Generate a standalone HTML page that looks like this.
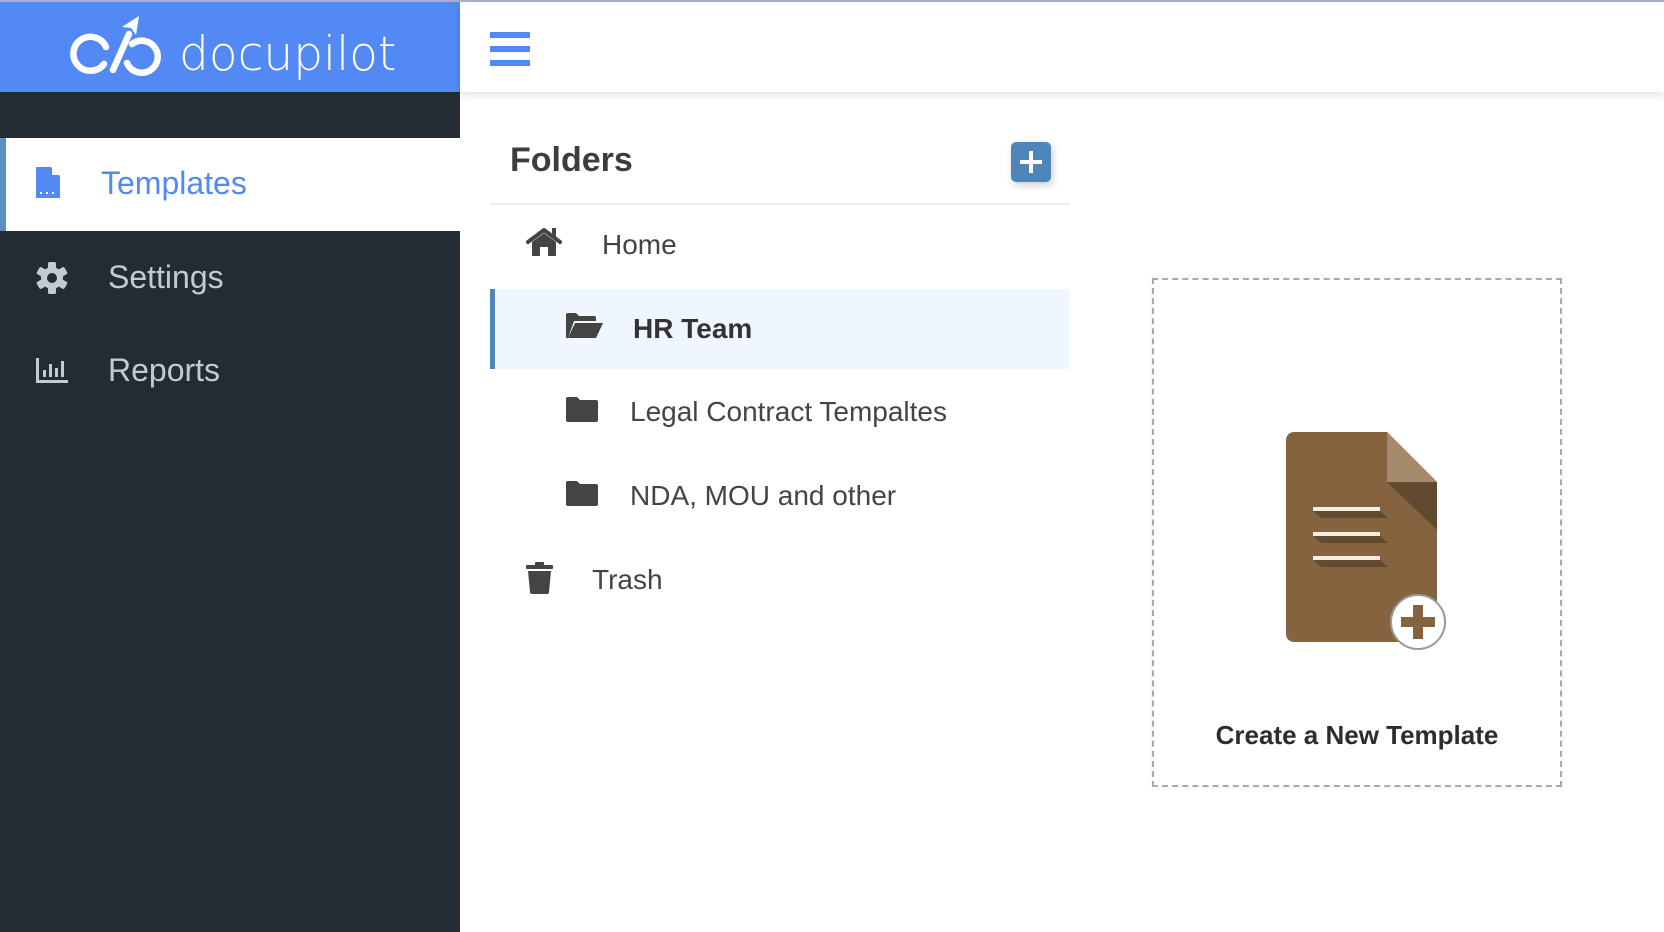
<!DOCTYPE html>
<html><head><meta charset="utf-8"><style>
*{margin:0;padding:0;box-sizing:border-box}
body{width:1664px;height:932px;overflow:hidden;background:#fff;font-family:"Liberation Sans",Arial,sans-serif;position:relative}
.abs{position:absolute}
.topline{left:0;top:0;width:1664px;height:2px;background:#a7b1c4;z-index:5}
.logo{left:0;top:0;width:460px;height:92px;background:#5389f5}
.side{left:0;top:92px;width:460px;height:840px;background:#242b33}
.hdr{left:460px;top:0;width:1204px;height:92px;background:#fff;box-shadow:0 3px 8px rgba(0,0,0,.12)}
.bar{left:490px;width:40px;height:6px;background:#5389f5}
.t{position:absolute;white-space:nowrap}
.dark{color:#444}
</style></head><body>
<div class="abs topline"></div>
<div class="abs logo">
<svg class="abs" style="left:0;top:0" width="460" height="92" viewBox="0 0 460 92">
<g fill="none" stroke="#fff" stroke-width="6.5" stroke-linecap="round">
<path d="M106 47 A17 17 0 1 0 104 64"/>
<path d="M113 70 L129 34"/>
<path d="M132 44 A16 16 0 1 1 127 63"/>
</g>
<path d="M122 27 L139 16 L136 35 L131 28 Z" fill="#fff"/>
<text x="179" y="70" fill="#fff" font-size="47" font-family="DejaVu Sans, Liberation Sans, sans-serif" font-weight="300">docupilot</text>
</svg>
</div>
<div class="abs hdr"></div>
<div class="abs bar" style="top:32px"></div>
<div class="abs bar" style="top:46px"></div>
<div class="abs bar" style="top:60px"></div>
<div class="abs side"></div>
<div class="abs" style="left:0;top:138px;width:460px;height:93px;background:#fff;border-left:6px solid #5a8fc0"></div>
<svg class="abs" style="left:36px;top:167px" width="24" height="31" viewBox="0 0 24 31"><path d="M1 0 H15 L24 9 V30 a1 1 0 0 1 -1 1 H1 a1 1 0 0 1 -1 -1 V1 a1 1 0 0 1 1 -1Z" fill="#5389f5"/><path d="M16 0 L24 8 H16Z" fill="#fff"/><rect x="4" y="25" width="2" height="2" fill="#fff"/><rect x="10" y="25" width="2" height="2" fill="#fff"/><rect x="16" y="25" width="2" height="2" fill="#fff"/></svg>
<div class="t" style="left:101px;top:165px;font-size:32px;color:#5389f5">Templates</div>
<svg class="abs" style="left:36px;top:261px" width="32" height="34" viewBox="-16 -17 32 34"><g fill="#c3cbd1"><circle r="11"/><g id="tt"><rect x="-4" y="-16" width="8" height="8" rx="1.5"/></g><use href="#tt" transform="rotate(60)"/><use href="#tt" transform="rotate(120)"/><use href="#tt" transform="rotate(180)"/><use href="#tt" transform="rotate(240)"/><use href="#tt" transform="rotate(300)"/></g><circle r="5" fill="#242b33"/></svg>
<div class="t" style="left:108px;top:259px;font-size:32px;color:#c3cbd1">Settings</div>
<svg class="abs" style="left:36px;top:358px" width="32" height="25" viewBox="0 0 32 25"><g fill="#c3cbd1"><rect x="0" y="0" width="3" height="25"/><rect x="0" y="22" width="32" height="3"/><rect x="7" y="12" width="3" height="7"/><rect x="13" y="6" width="3" height="13"/><rect x="19" y="10" width="3" height="9"/><rect x="25" y="3" width="3" height="16"/></g></svg>
<div class="t" style="left:108px;top:352px;font-size:32px;color:#c3cbd1">Reports</div>

<div class="t dark" style="left:510px;top:141px;font-size:34px;font-weight:bold;color:#3d3d3d">Folders</div>
<div class="abs" style="left:1011px;top:142px;width:40px;height:40px;border-radius:5px;background:#4f86b8;box-shadow:2px 3px 8px rgba(0,0,0,.2)"></div>
<div class="abs" style="left:1020px;top:160px;width:22px;height:4px;background:#fff"></div>
<div class="abs" style="left:1029px;top:151px;width:4px;height:22px;background:#fff"></div>
<div class="abs" style="left:490px;top:203px;width:580px;height:2px;background:#eee"></div>
<svg class="abs" style="left:526px;top:227px" width="36" height="29" viewBox="0 0 36 29"><path d="M2 15 L18 3 L34 15" fill="none" stroke="#444" stroke-width="4" stroke-linecap="round" stroke-linejoin="round"/><path d="M6 15 L18 6 L30 15 V29 H22 V20 H14 V29 H6Z" fill="#444"/><rect x="26" y="1" width="4" height="10" fill="#444"/></svg>
<div class="t dark" style="left:602px;top:229px;font-size:28px">Home</div>
<div class="abs" style="left:490px;top:289px;width:580px;height:80px;background:#f0f6fe;border-left:5px solid #4f86b8"></div>
<svg class="abs" style="left:566px;top:313px" width="37" height="25" viewBox="0 0 37 25"><path d="M0 2 a2 2 0 0 1 2 -2 H10 L13 3 H28 a2 2 0 0 1 2 2 V8 H8 L2 25 H0Z" fill="#444"/><path d="M9 10 H37 L30 25 H2Z" fill="#444"/></svg>
<div class="t" style="left:633px;top:313px;font-size:28px;font-weight:bold;color:#333">HR Team</div>
<svg class="abs" style="left:566px;top:397px" width="32" height="25" viewBox="0 0 32 25"><path d="M0 2 a2 2 0 0 1 2 -2 H11 L14 3 H30 a2 2 0 0 1 2 2 V23 a2 2 0 0 1 -2 2 H2 a2 2 0 0 1 -2 -2Z" fill="#444"/></svg>
<div class="t dark" style="left:630px;top:396px;font-size:28px">Legal Contract Tempaltes</div>
<svg class="abs" style="left:566px;top:481px" width="32" height="25" viewBox="0 0 32 25"><path d="M0 2 a2 2 0 0 1 2 -2 H11 L14 3 H30 a2 2 0 0 1 2 2 V23 a2 2 0 0 1 -2 2 H2 a2 2 0 0 1 -2 -2Z" fill="#444"/></svg>
<div class="t dark" style="left:630px;top:480px;font-size:28px">NDA, MOU and other</div>
<svg class="abs" style="left:526px;top:562px" width="27" height="32" viewBox="0 0 27 32"><rect x="0" y="3" width="27" height="4" rx="1" fill="#444"/><rect x="9" y="0" width="9" height="4" rx="1" fill="#444"/><path d="M2 9 H25 L23 30 a2 2 0 0 1 -2 2 H6 a2 2 0 0 1 -2 -2Z" fill="#444"/></svg>
<div class="t dark" style="left:592px;top:564px;font-size:28px">Trash</div>

<div class="abs" style="left:1152px;top:278px;width:410px;height:509px;border:2px dashed #aaa;box-shadow:0 0 6px rgba(0,0,0,.06)"></div>
<svg class="abs" style="left:1280px;top:425px" width="190" height="230" viewBox="1280 425 190 230">
<path d="M1294 432 H1387 L1437 482 V634 a8 8 0 0 1 -8 8 H1294 a8 8 0 0 1 -8 -8 V440 a8 8 0 0 1 8 -8Z" fill="#85633e"/>
<path d="M1387 432 L1437 482 H1387Z" fill="#a5896b"/>
<path d="M1387 482 H1437 V530Z" fill="#624a30"/>
<g fill="#624a30"><path d="M1313 511 H1380 L1388 518 H1321Z"/><path d="M1313 536 H1380 L1388 543 H1321Z"/><path d="M1313 560 H1380 L1388 567 H1321Z"/></g>
<g fill="#f3ede6"><rect x="1313" y="507" width="67" height="4"/><rect x="1313" y="532" width="67" height="4"/><rect x="1313" y="556" width="67" height="4"/></g>
<circle cx="1418" cy="622" r="27" fill="#fff" stroke="#999" stroke-width="2"/>
<rect x="1413" y="605" width="10" height="34" fill="#85633e"/><rect x="1401" y="617" width="34" height="10" fill="#85633e"/>
</svg>
<div class="t" style="left:1152px;width:410px;text-align:center;top:720px;font-size:26px;font-weight:bold;color:#2d2d2d">Create a New Template</div>
</body></html>
